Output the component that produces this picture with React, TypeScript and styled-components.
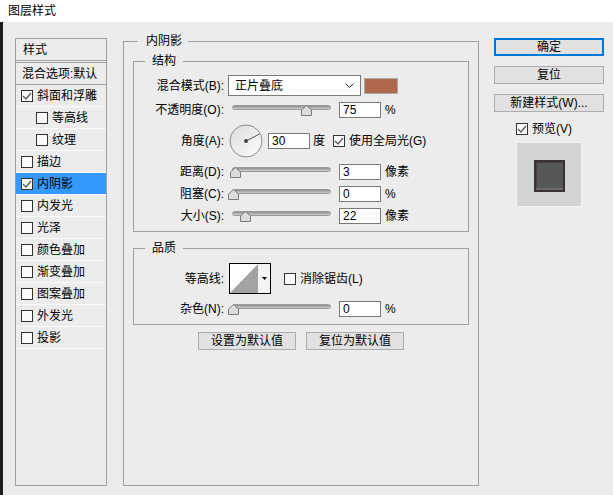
import styled, { createGlobalStyle } from 'styled-components';

const GlobalStyle = createGlobalStyle`
  body {
    margin: 0;
    background: #ececec;
    font-family: "Liberation Sans", "Noto Sans CJK SC", sans-serif;
    font-size: 12px;
    line-height: 16px;
    color: #000;
  }
`;

const Window = styled.div`
  width: 613px;
  height: 495px;
  display: flex;
  flex-direction: column;
  overflow: hidden;
  background: #ececec;
`;

const TitleBar = styled.div`
  height: 22px;
  flex: none;
  background: #fff;
  padding-left: 8px;
  display: flex;
  align-items: center;
`;

const Body = styled.div`
  flex: 1;
  min-height: 0;
  display: flex;
  align-items: stretch;
  border-left: 3px solid #1c1c1c;
  padding: 16px 0 9px 12px;
`;

/* left list */
const StyleList = styled.div`
  width: 92px;
  box-sizing: border-box;
  flex: none;
  border: 1px solid #a0a0a0;
  display: flex;
  flex-direction: column;
`;

const ListHeader = styled.div<{ $first?: boolean }>`
  height: 21px;
  display: flex;
  align-items: center;
  padding-left: ${({ $first }) => ($first ? 7 : 6)}px;
  border-bottom: 1px solid #a0a0a0;
  border-top: ${({ $first }) => ($first ? 'none' : '1px solid #a0a0a0')};
  margin-top: ${({ $first }) => ($first ? 0 : 1)}px;
  white-space: nowrap;
`;

const ListItem = styled.div<{ $active?: boolean; $sub?: boolean }>`
  height: 21px;
  display: flex;
  align-items: center;
  gap: 4px;
  padding-left: ${({ $sub }) => ($sub ? 20 : 5)}px;
  border-bottom: 1px solid #fbfbfb;
  background: ${({ $active }) => ($active ? '#3399ff' : 'transparent')};
  white-space: nowrap;
`;

const Box = styled.span`
  width: 12px;
  height: 12px;
  box-sizing: border-box;
  flex: none;
  border: 1px solid #333;
  background: #fafafa;
  display: inline-flex;
  align-items: center;
  justify-content: center;
`;

/* group boxes */
const GroupBox = styled.fieldset`
  margin: 0;
  padding: 0;
  min-width: 0;
  border: 1px solid #a0a0a0;
`;

const MainBox = styled(GroupBox)`
  width: 356px;
  box-sizing: border-box;
  flex: none;
  margin: -5px 0 0 16px;
  padding: 4px 9px 0 9px;
  display: flex;
  flex-direction: column;
`;

const SubBox = styled(GroupBox)<{ $gapTop?: number }>`
  margin-top: ${({ $gapTop }) => $gapTop ?? 0}px;
`;

const Legend = styled.legend<{ $offset: number }>`
  margin-left: ${({ $offset }) => $offset}px;
  padding: 0 7px;
  line-height: 16px;
`;

const Rows = styled.div<{ $gap: number; $top: number }>`
  display: flex;
  flex-direction: column;
  gap: ${({ $gap }) => $gap}px;
  padding: ${({ $top }) => $top}px 0 7px 0;
`;

const Row = styled.div`
  display: flex;
  align-items: center;
`;

const Label = styled.span`
  width: 90px;
  flex: none;
  text-align: right;
  margin-right: 4px;
  white-space: nowrap;
`;

const Select = styled.div`
  width: 133px;
  height: 21px;
  box-sizing: border-box;
  border: 1px solid #7a7a7a;
  background: #fff;
  display: flex;
  align-items: center;
  justify-content: space-between;
  padding: 0 6px 0 6px;
`;

const Swatch = styled.div`
  width: 34px;
  height: 16px;
  box-sizing: border-box;
  margin-left: 3px;
  border: 1px solid #a8a8a8;
  background: #b0694c;
`;

const Slider = styled.div`
  position: relative;
  width: 107px;
  height: 16px;
  flex: none;
`;

const Track = styled.div`
  margin: 3px 4px 0 4px;
  height: 5px;
  box-sizing: border-box;
  border: 1px solid #9a9a9a;
  border-radius: 3px;
  background: linear-gradient(#8c8c8c, #cfcfcf);
`;

const Thumb = styled.svg`
  position: absolute;
  top: 3px;
`;

const NumBox = styled.div<{ $gap?: number }>`
  width: 42px;
  height: 16px;
  box-sizing: border-box;
  margin-left: ${({ $gap }) => $gap ?? 4}px;
  border: 1px solid #7a7a7a;
  background: #fff;
  padding-left: 3px;
  display: flex;
  align-items: center;
`;

const Unit = styled.span<{ $gap?: number }>`
  margin-left: ${({ $gap }) => $gap ?? 4}px;
  white-space: nowrap;
`;

const CheckLabel = styled.span<{ $gap: number }>`
  display: flex;
  align-items: center;
  gap: 4px;
  margin-left: ${({ $gap }) => $gap}px;
  white-space: nowrap;
`;

const ButtonRow = styled.div`
  display: flex;
  justify-content: center;
  gap: 10px;
  margin-top: 7px;
`;

const Button = styled.div<{ $w: number; $primary?: boolean }>`
  width: ${({ $w }) => $w}px;
  height: 18px;
  box-sizing: border-box;
  border: ${({ $primary }) => ($primary ? '2px solid #0078d7' : '1px solid #adadad')};
  background: #e1e1e1;
  display: flex;
  align-items: center;
  justify-content: center;
  white-space: nowrap;
`;

/* right column */
const SideColumn = styled.div`
  width: 110px;
  flex: none;
  margin-left: 15px;
  display: flex;
  flex-direction: column;
  align-items: center;
  gap: 10px;
`;

const PreviewCheck = styled.div`
  display: flex;
  align-items: center;
  gap: 4px;
  height: 13px;
  margin-top: 0;
  padding-right: 10px;
`;

const PreviewBox = styled.div`
  width: 66px;
  height: 65px;
  box-sizing: border-box;
  margin-top: -3px;
  border: 1px solid #f2f2f2;
  background: #d3d3d3;
  display: flex;
  align-items: center;
  justify-content: center;
  padding-top: 3px;
`;

const PreviewSquare = styled.div`
  width: 31px;
  height: 32px;
  box-sizing: border-box;
  border: 2px solid #3b3331;
  background: #575757;
  box-shadow: inset 0 -2px 0 #6a6a6a, inset 1px 1px 1px #444;
`;

const Check = ({ on }: { on?: boolean }) => (
  <Box>
    {on && (
      <svg width="10" height="10" viewBox="0 0 10 10">
        <polyline points="1,5 4,8 9,2" fill="none" stroke="#555" strokeWidth="1.2" />
      </svg>
    )}
  </Box>
);

const SliderCtl = ({ pct }: { pct: number }) => (
  <Slider>
    <Track />
    <Thumb width="11" height="11" viewBox="0 0 11 11" style={{ left: 4 + pct * 99 - 5.5 }}>
      <polygon points="5.5,0.5 10.5,5 10.5,10.5 0.5,10.5 0.5,5" fill="#dcdcdc" stroke="#7a7a7a" strokeWidth="1" />
    </Thumb>
  </Slider>
);

const Dial = () => (
  <svg width="34" height="34" viewBox="0 0 34 34" style={{ marginLeft: 1, flex: 'none' }}>
    <defs>
      <linearGradient id="dialg" x1="0" y1="0" x2="1" y2="1">
        <stop offset="0" stopColor="#dcdcdc" />
        <stop offset="1" stopColor="#fdfdfd" />
      </linearGradient>
    </defs>
    <circle cx="17" cy="17" r="16" fill="url(#dialg)" stroke="#8c8c8c" strokeWidth="1" />
    <line x1="17" y1="17" x2="30.5" y2="10" stroke="#555" strokeWidth="1" />
    <circle cx="17" cy="17" r="2" fill="#444" />
  </svg>
);

const Contour = () => (
  <svg width="42" height="31" viewBox="0 0 42 31" style={{ flex: 'none', marginLeft: 1 }}>
    <rect x="0.5" y="0.5" width="41" height="30" fill="#f4f4f4" stroke="#000" />
    <rect x="1" y="1" width="28" height="29" fill="#fff" />
    <polygon points="1,30 29,1 29,30" fill="#a3a3a3" />
    <polygon points="33,14 38,14 35.5,17" fill="#000" />
  </svg>
);

const items: { name: string; on?: boolean; sub?: boolean; active?: boolean }[] = [
  { name: '斜面和浮雕', on: true },
  { name: '等高线', sub: true },
  { name: '纹理', sub: true },
  { name: '描边' },
  { name: '内阴影', on: true, active: true },
  { name: '内发光' },
  { name: '光泽' },
  { name: '颜色叠加' },
  { name: '渐变叠加' },
  { name: '图案叠加' },
  { name: '外发光' },
  { name: '投影' },
];

const App = () => (
  <Window>
    <GlobalStyle />
    <TitleBar>图层样式</TitleBar>
    <Body>
      <StyleList>
        <ListHeader $first>样式</ListHeader>
        <ListHeader>混合选项:默认</ListHeader>
        {items.map((it) => (
          <ListItem key={it.name} $active={it.active} $sub={it.sub}>
            <Check on={it.on} />
            {it.name}
          </ListItem>
        ))}
      </StyleList>

      <MainBox>
        <Legend $offset={5} style={{ paddingLeft: 8, paddingRight: 6 }}>内阴影</Legend>
        <SubBox>
          <Legend $offset={11}>结构</Legend>
          <Rows $gap={6} $top={6}>
            <Row>
              <Label>混合模式(B):</Label>
              <Select>
                正片叠底
                <svg width="9" height="5" viewBox="0 0 9 5">
                  <polyline points="0.5,0.5 4.5,4.5 8.5,0.5" fill="none" stroke="#333" strokeWidth="1" />
                </svg>
              </Select>
              <Swatch />
            </Row>
            <Row>
              <Label>不透明度(O):</Label>
              <SliderCtl pct={0.755} />
              <NumBox>75</NumBox>
              <Unit>%</Unit>
            </Row>
            <Row>
              <Label>角度(A):</Label>
              <Dial />
              <NumBox $gap={5}>30</NumBox>
              <Unit $gap={3}>度</Unit>
              <CheckLabel $gap={8}>
                <Check on />
                使用全局光(G)
              </CheckLabel>
            </Row>
            <Row>
              <Label>距离(D):</Label>
              <SliderCtl pct={0.04} />
              <NumBox>3</NumBox>
              <Unit>像素</Unit>
            </Row>
            <Row>
              <Label>阻塞(C):</Label>
              <SliderCtl pct={0.01} />
              <NumBox>0</NumBox>
              <Unit>%</Unit>
            </Row>
            <Row>
              <Label>大小(S):</Label>
              <SliderCtl pct={0.14} />
              <NumBox>22</NumBox>
              <Unit>像素</Unit>
            </Row>
          </Rows>
        </SubBox>

        <SubBox $gapTop={8}>
          <Legend $offset={11}>品质</Legend>
          <Rows $gap={7} $top={7}>
            <Row>
              <Label>等高线:</Label>
              <Contour />
              <CheckLabel $gap={13}>
                <Check />
                消除锯齿(L)
              </CheckLabel>
            </Row>
            <Row>
              <Label>杂色(N):</Label>
              <SliderCtl pct={0.01} />
              <NumBox>0</NumBox>
              <Unit>%</Unit>
            </Row>
          </Rows>
        </SubBox>

        <ButtonRow>
          <Button $w={98}>设置为默认值</Button>
          <Button $w={98}>复位为默认值</Button>
        </ButtonRow>
      </MainBox>

      <SideColumn>
        <Button $w={110} $primary>确定</Button>
        <Button $w={110}>复位</Button>
        <Button $w={110}>新建样式(W)...</Button>
        <PreviewCheck>
          <Check on />
          预览(V)
        </PreviewCheck>
        <PreviewBox>
          <PreviewSquare />
        </PreviewBox>
      </SideColumn>
    </Body>
  </Window>
);

export default App;
